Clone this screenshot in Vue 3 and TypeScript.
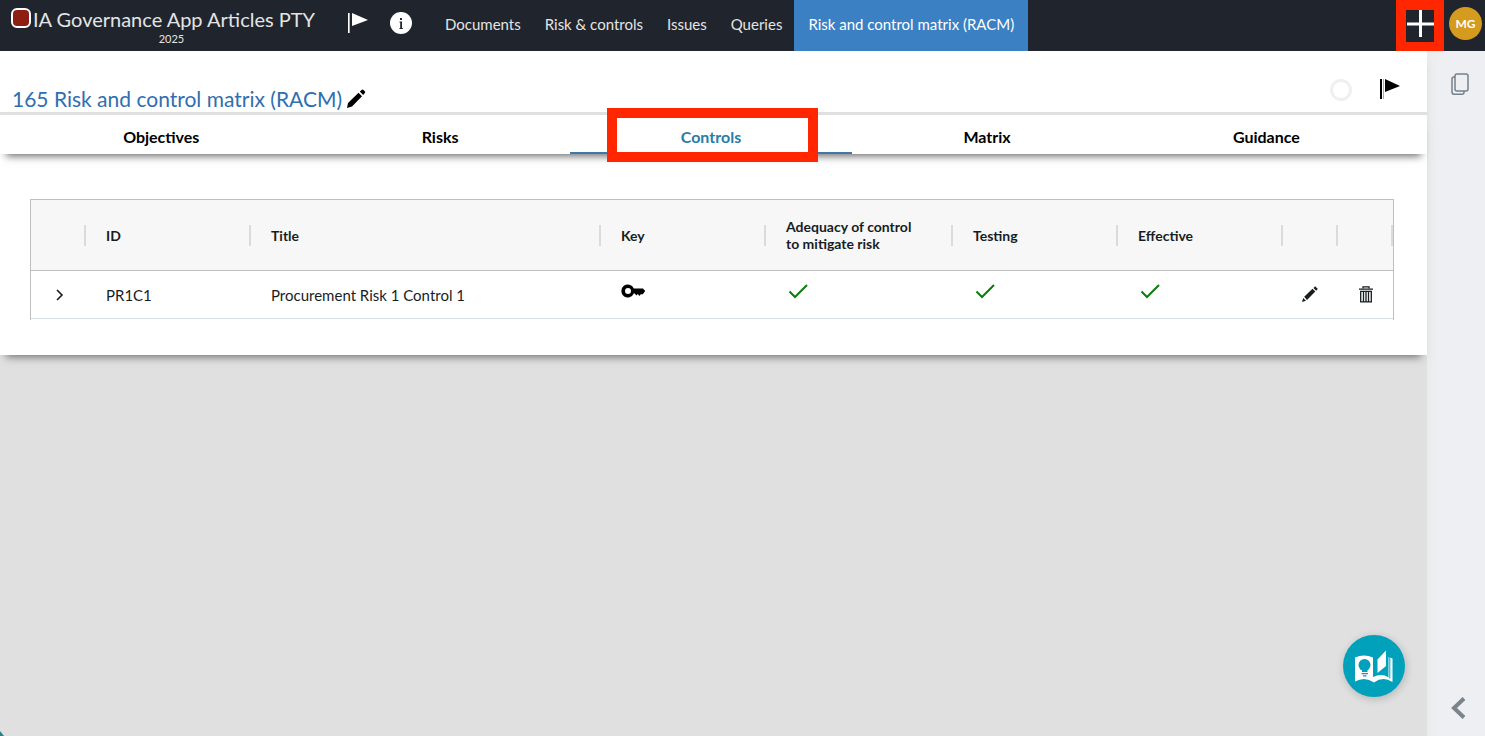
<script setup lang="ts">
import { ref } from 'vue'

interface Control {
  id: string
  title: string
  key: boolean
  adequate: boolean
  tested: boolean
  effective: boolean
}

const navItems: string[] = ['Documents', 'Risk & controls', 'Issues', 'Queries', 'Risk and control matrix (RACM)']
const activeNav = ref('Risk and control matrix (RACM)')

const tabs: string[] = ['Objectives', 'Risks', 'Controls', 'Matrix', 'Guidance']
const activeTab = ref('Controls')

const controls: Control[] = [
  { id: 'PR1C1', title: 'Procurement Risk 1 Control 1', key: true, adequate: true, tested: true, effective: true },
]
</script>

<template>
  <div class="app">
    <header class="topbar">
      <div class="brand">
        <div class="brand-row">
          <span class="brand-mark"></span>
          <span class="brand-name">IA Governance App Articles PTY</span>
        </div>
        <div class="brand-year">2025</div>
      </div>
      <button class="icon-btn flag-btn" type="button" aria-label="Flag">
        <svg width="20" height="20" viewBox="0 0 20 20">
          <path d="M0 0h1v20H0z" fill="#fff" />
          <path d="M1 0h1v20H1z" fill="#aeb0b3" />
          <path d="M4 0l16 7-16 6z" fill="#fff" />
        </svg>
      </button>
      <button class="icon-btn info-btn" type="button" aria-label="Information">
        <svg width="22" height="22" viewBox="0 0 22 22">
          <circle cx="11" cy="11" r="11" fill="#fff" />
          <path d="M10 6h2v2h-2zM9.500 9.500H12V16h.8v1H9.500v-1h.7v-5.500h-.7z" fill="#20252d" />
        </svg>
      </button>
      <nav class="nav">
        <a
          v-for="item in navItems"
          :key="item"
          href="#"
          :class="{ active: item === activeNav }"
          @click.prevent="activeNav = item"
        >{{ item }}</a>
      </nav>
      <button class="add-btn" type="button" aria-label="Add">
        <svg width="28" height="28" viewBox="0 0 28 28">
          <path d="M1 14h27M14.500 0v27" stroke="#fff" stroke-width="3" />
        </svg>
      </button>
      <button class="avatar" type="button">MG</button>
    </header>

    <div class="body">
      <main class="main">
        <section class="panel">
          <div class="title-bar">
            <h1>165 Risk and control matrix (RACM)</h1>
            <button class="icon-btn edit-title" type="button" aria-label="Edit title">
              <svg width="20" height="20" viewBox="0 0 20 20">
                <path d="M1 19l1-5L12.500 3.800l3.500 3.500L6 17.500zM13.800 2.600L16 .8q.6-.5 1.200 0L19 2.600q.5.600 0 1.200L17.200 6z" fill="#000" />
              </svg>
            </button>
            <span class="status-ring"></span>
            <button class="icon-btn title-flag" type="button" aria-label="Flag matrix">
              <svg width="20" height="20" viewBox="0 0 20 20">
                <path d="M0 0h2v20H0z" fill="#000" />
                <path d="M3 0h1v20H3z" fill="#aaa" />
                <path d="M5 0l15 7-15 6z" fill="#000" />
              </svg>
            </button>
          </div>

          <div class="tabs" role="tablist">
            <button
              v-for="tab in tabs"
              :key="tab"
              type="button"
              role="tab"
              :aria-selected="tab === activeTab"
              :class="['tab', { active: tab === activeTab }]"
              @click="activeTab = tab"
            >{{ tab }}</button>
          </div>

          <div class="table-wrap">
            <table>
              <colgroup>
                <col class="c-icon" />
                <col class="c-std" />
                <col />
                <col class="c-std" />
                <col class="c-wide" />
                <col class="c-std" />
                <col class="c-std" />
                <col class="c-icon" />
                <col class="c-icon" />
              </colgroup>
              <thead>
                <tr>
                  <th></th>
                  <th>ID</th>
                  <th>Title</th>
                  <th>Key</th>
                  <th>Adequacy of control to mitigate risk</th>
                  <th>Testing</th>
                  <th>Effective</th>
                  <th></th>
                  <th></th>
                </tr>
              </thead>
              <tbody>
                <tr v-for="c in controls" :key="c.id">
                  <td class="action">
                    <button class="icon-btn" type="button" aria-label="Expand row">
                      <svg width="16" height="16" viewBox="0 0 16 16">
                        <path d="M6 3l5 5-5 5" fill="none" stroke="#181d1f" stroke-width="1.600" />
                      </svg>
                    </button>
                  </td>
                  <td>{{ c.id }}</td>
                  <td>{{ c.title }}</td>
                  <td class="mark">
                    <svg v-if="c.key" width="25" height="24" viewBox="0 0 25 24">
                      <path d="M12.800 9.500A6.500 6.500 0 1 0 12.800 14.500h1l1.500 2 1.500-1.500 1.500 2 1.500-1.800h2l2.400-3.200L22 9.500zM7 9a3 3 0 1 1 0 6 3 3 0 0 1 0-6z" fill="#000" />
                    </svg>
                  </td>
                  <td v-for="(ok, i) in [c.adequate, c.tested, c.effective]" :key="i" class="mark">
                    <svg v-if="ok" width="24" height="24" viewBox="0 0 24 24">
                      <path d="M3.500 12.500l5.500 5.500L21 6" fill="none" stroke="#0a7d0a" stroke-width="2" />
                    </svg>
                  </td>
                  <td class="action">
                    <button class="icon-btn" type="button" aria-label="Edit control">
                      <svg width="18" height="18" viewBox="0 0 18 18">
                        <path d="M0 16l1.200-4 2.800 2.800zM2.200 10.800L10.500 2.800l2.800 2.800-8.300 8.300zM11.500 2L13.200.3 15.800 2.900 14.200 4.700z" fill="#181d1f" />
                      </svg>
                    </button>
                  </td>
                  <td class="action">
                    <button class="icon-btn" type="button" aria-label="Delete control">
                      <svg width="16" height="18" viewBox="0 0 16 18">
                        <path d="M5 2.300V.8h6v1.500M1 3.100h14M2.700 5.300h10.600v10.500H2.700zM5.500 5.300v10M8 5.300v10M10.500 5.300v10" fill="none" stroke="#181d1f" stroke-width="1.300" />
                      </svg>
                    </button>
                  </td>
                </tr>
              </tbody>
            </table>
          </div>
        </section>
        <button class="guide-btn" type="button" aria-label="Guide">
          <svg width="38" height="34" viewBox="0 0 38 34">
            <path d="M0 8.500Q9 4.500 18 8.500V28Q27 24 33.500 28.500V8l4 1.500V33Q28 27 19 33.500 10 27 0 32.500z" fill="#fff" />
            <path d="M22.500 10.500L31 1.500V17L22.500 24z" fill="#fff" />
            <path d="M34.800 8v21.500" stroke="#02a1bb" stroke-width="1" />
            <circle cx="9.500" cy="16" r="6" fill="#02a1bb" />
            <path d="M7 20h5.500v3H7zM6.500 24h6.500v1.200H6.500zM8 26.200h3.500v1.300H8z" fill="#02a1bb" />
          </svg>
        </button>
        <span class="corner-dot"></span>
      </main>

      <aside class="side">
        <button class="icon-btn" type="button" aria-label="Copies">
          <svg width="18" height="22" viewBox="0 0 18 22">
            <g fill="none" stroke="#76808a" stroke-width="1.500">
              <rect x="4" y="1" width="13" height="17" rx="2" />
              <path d="M4 4H3Q1 4 1 6v13q0 2.200 2 2.200h8q2 0 2-2V18" />
            </g>
          </svg>
        </button>
        <button class="icon-btn" type="button" aria-label="Open side panel">
          <svg width="18" height="22" viewBox="0 0 18 22">
            <path d="M13 1.500L3 11l10 9.500" fill="none" stroke="#7b838b" stroke-width="4" />
          </svg>
        </button>
      </aside>
    </div>
  </div>
</template>

<style>
body {
  margin: 0;
}
</style>

<style scoped>
.app {
  display: flex;
  flex-direction: column;
  min-height: 100vh;
  font-family: Lato, 'Liberation Sans', sans-serif;
  color: #181d1f;
}
* {
  box-sizing: border-box;
}
button {
  font-family: inherit;
  padding: 0;
  border: 0;
  background: none;
  cursor: pointer;
}
svg {
  display: block;
}

.topbar {
  display: flex;
  height: 51px;
  background: #20252d;
  color: #e3e4e5;
}
.brand {
  padding: 8px 0 0 11px;
  width: 332px;
}
.brand-row {
  display: flex;
  gap: 2px;
  height: 24px;
}
.brand-mark {
  width: 20px;
  height: 20px;
  border: 2px solid #fff;
  border-radius: 6px;
  background: #8c1f11;
}
.brand-name {
  font-size: 20px;
  line-height: 22px;
  white-space: nowrap;
}
.brand-year {
  text-align: center;
  font-size: 11px;
  line-height: 14px;
}
.flag-btn {
  margin: 0 22px 5px 16px;
}
.info-btn {
  margin-bottom: 5px;
}
.nav {
  display: flex;
  margin-left: 21px;
}
.nav a {
  padding: 0 12px;
  color: inherit;
  font-size: 15px;
  line-height: 48px;
  text-decoration: none;
  white-space: nowrap;
}
.nav a.active {
  padding: 0 14px;
  background: #3a80c3;
  color: #fff;
}
.add-btn {
  display: flex;
  width: 48px;
  height: 52px;
  margin-left: auto;
  border: 10px solid #ff2600;
}
.avatar {
  width: 33px;
  height: 33px;
  margin: 7px 3px 0 5px;
  border-radius: 50%;
  background: #d59b1e;
  color: #fff;
  font-size: 12px;
  font-weight: 700;
}

.body {
  display: flex;
  flex: 1;
}
.main {
  position: relative;
  flex: 1;
  background: #e0e0e0;
}
.panel {
  padding-bottom: 35px;
  background: #fff;
  box-shadow: 0 8px 8px -6px rgba(0, 0, 0, 0.5);
}
.title-bar {
  display: flex;
  align-items: flex-end;
  height: 64px;
  padding: 0 27px 0 12px;
  border-bottom: 3px solid #e0e0e0;
}
h1 {
  margin: 0;
  color: #2f6eb0;
  font-size: 21px;
  font-weight: 400;
  line-height: 26px;
}
.edit-title {
  margin: 0 auto 3px 4px;
}
.status-ring {
  width: 22px;
  height: 22px;
  margin: 0 28px 11px 0;
  border: 3px solid #efefef;
  border-radius: 50%;
}
.title-flag {
  margin-bottom: 13px;
}

.tabs {
  display: flex;
  height: 39px;
  padding: 0 16px 0 12px;
  box-shadow: 0 8px 8px -6px rgba(0, 0, 0, 0.6);
}
.tab {
  position: relative;
  flex: 1 1 auto;
  padding-top: 6px;
  border-bottom: 2px solid transparent;
  color: #000;
  font-size: 16px;
  font-weight: 700;
}
.tab.active {
  border-color: #3d78ad;
  color: #2a7ca6;
}
.tab.active::after {
  content: '';
  position: absolute;
  inset: -7px 34px -10px 37px;
  border: 10px solid #ff2600;
}

.table-wrap {
  margin: 45px 33px 0 30px;
  padding-bottom: 1px;
  border: 1px solid #bdc0c3;
  border-bottom: 0;
}
table {
  width: 100%;
  table-layout: fixed;
  border-collapse: separate;
  border-spacing: 0;
}
.c-icon {
  width: 55px;
}
.c-std {
  width: 165px;
}
.c-wide {
  width: 187px;
}
th {
  position: relative;
  height: 71px;
  padding: 0 36px 0 20px;
  border-bottom: 1px solid #bdc0c3;
  background: #f7f7f7;
  font-size: 14px;
  font-weight: 700;
  line-height: 17px;
  text-align: left;
}
th:empty {
  padding: 0;
}
th::after {
  content: '';
  position: absolute;
  top: 25px;
  right: 0;
  width: 2px;
  height: 21px;
  background: #dadbdc;
}
td {
  height: 48px;
  padding: 0 20px;
  border-bottom: 1px solid #d5dde8;
  font-size: 15px;
}
td.mark {
  padding-bottom: 8px;
}
td.action {
  padding: 0;
}
.action .icon-btn {
  display: block;
  margin: 0 auto;
}

.guide-btn {
  position: absolute;
  right: 22px;
  bottom: 39px;
  display: grid;
  place-items: center;
  width: 62px;
  height: 62px;
  border-radius: 50%;
  background: #02a1bb;
  box-shadow: 1px 2px 8px rgba(0, 0, 0, 0.2);
}
.corner-dot {
  position: absolute;
  left: 0;
  bottom: 0;
  width: 4px;
  height: 5px;
  background: #2c7f81;
  clip-path: polygon(0 0, 100% 100%, 0 100%);
}
.side {
  display: flex;
  flex-direction: column;
  align-items: center;
  justify-content: space-between;
  width: 58px;
  padding: 22px 0 17px 8px;
  background: linear-gradient(90deg, #eaebeb, #edeff2 12px);
}
</style>
